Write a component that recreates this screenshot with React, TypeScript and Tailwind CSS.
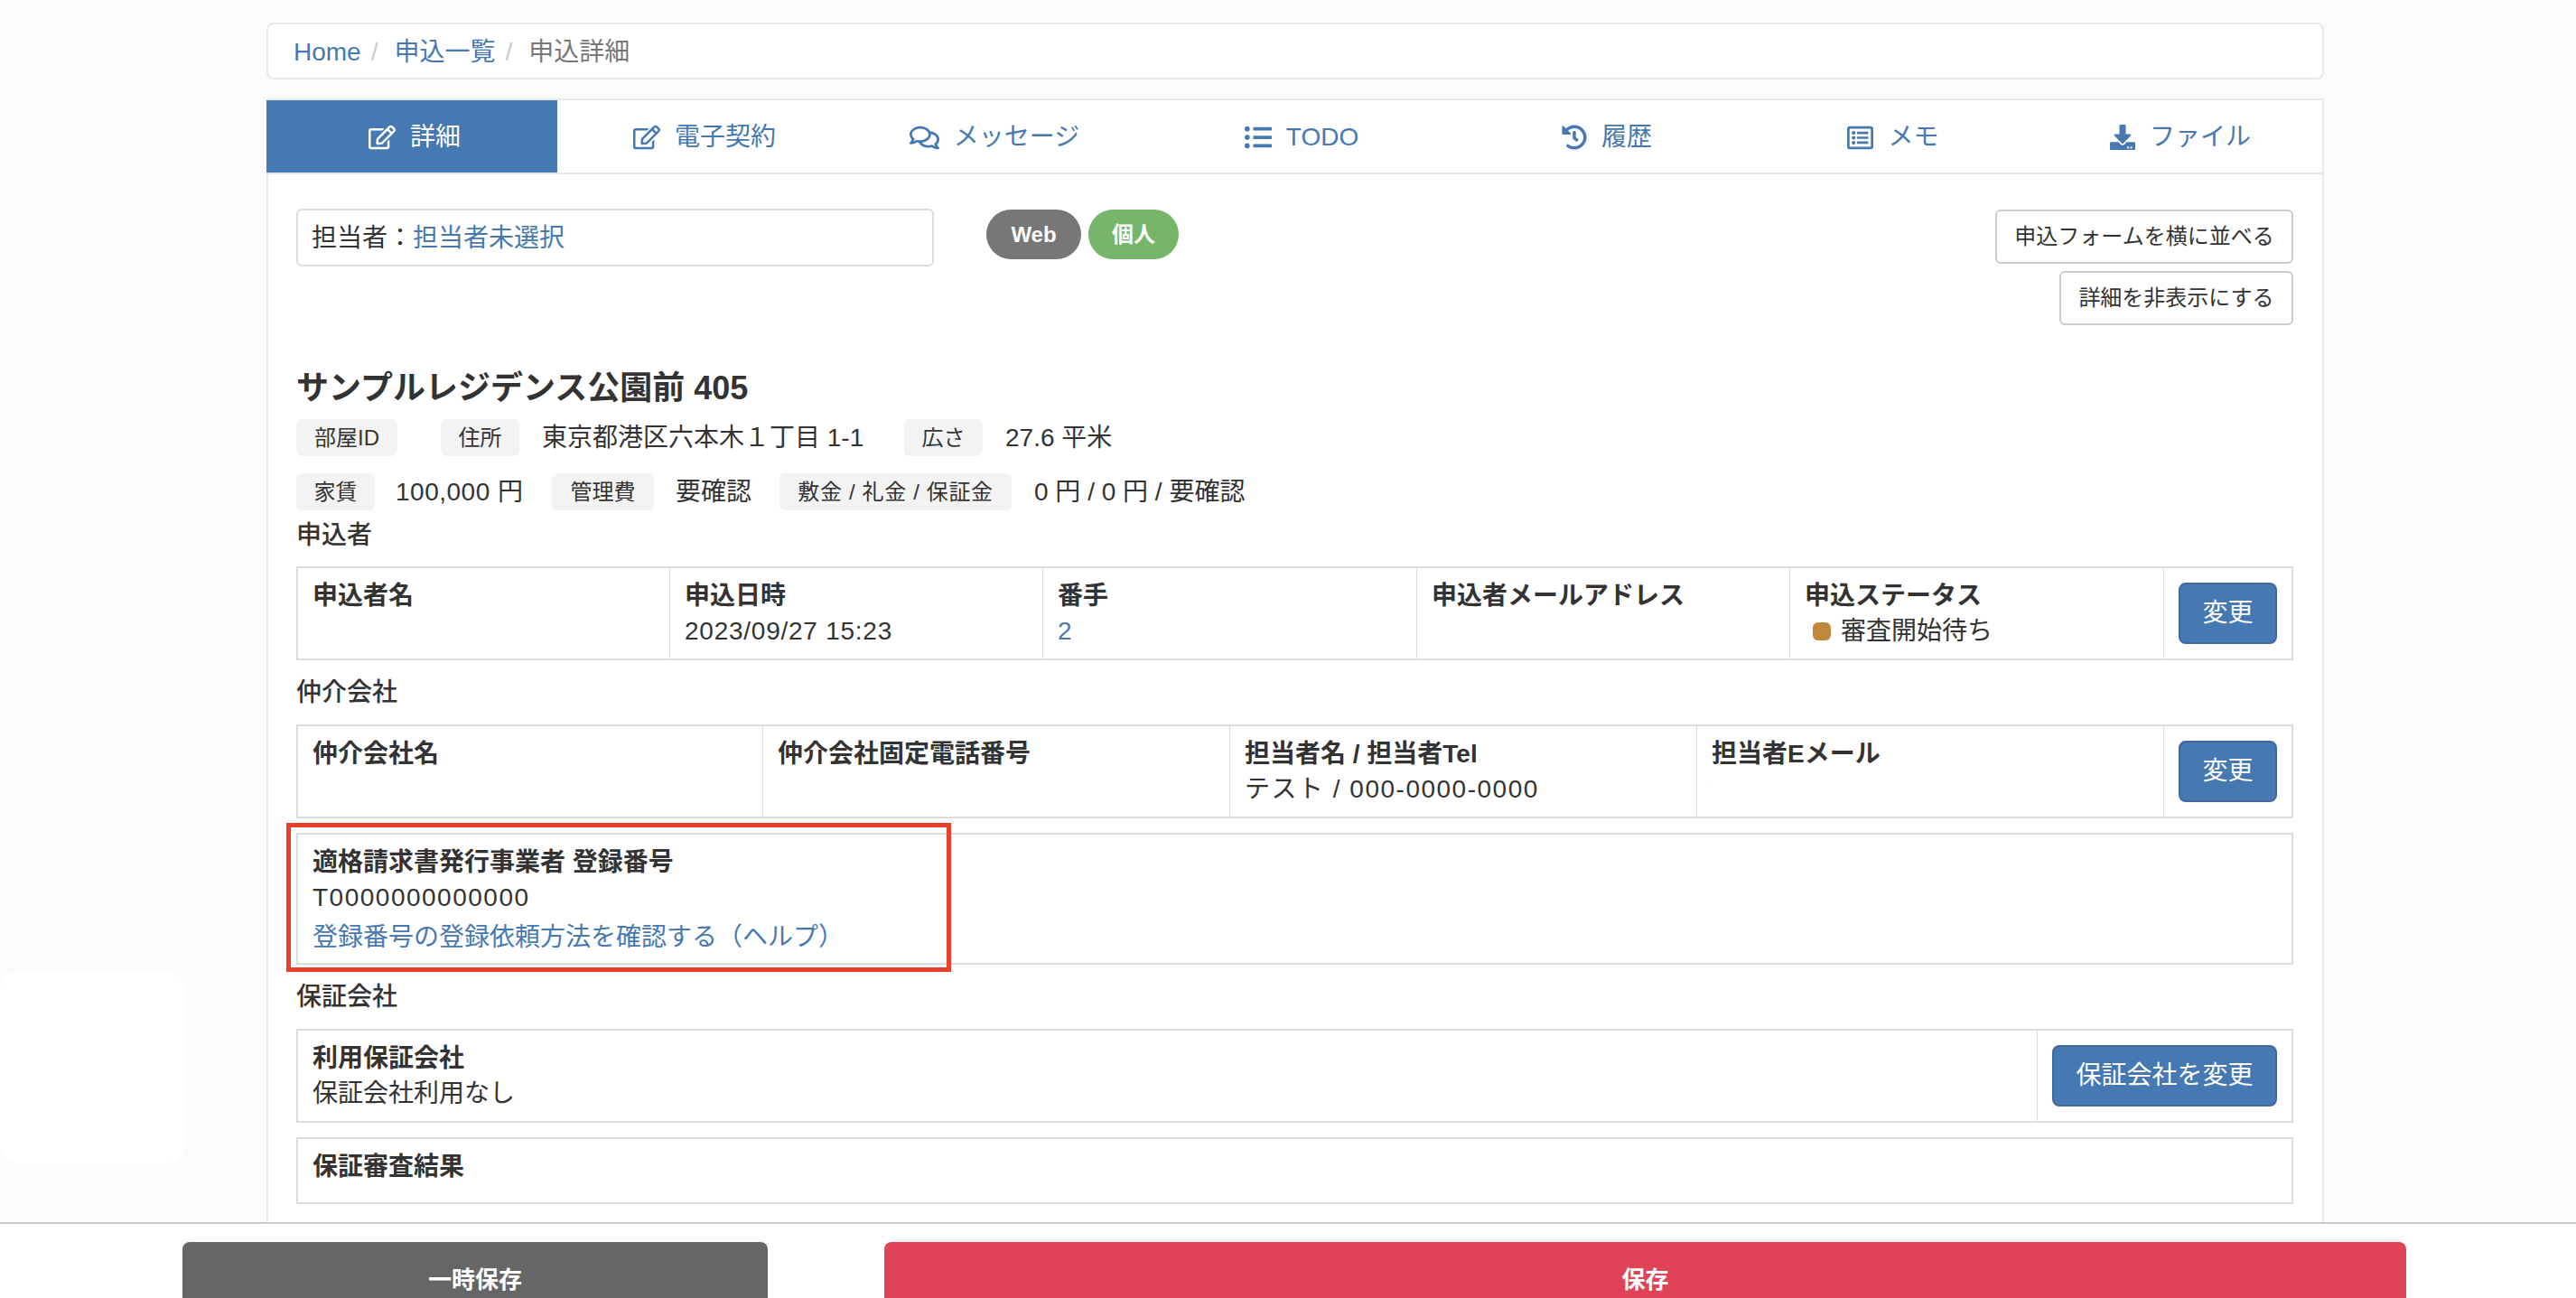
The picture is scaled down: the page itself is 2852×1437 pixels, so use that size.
import React from "react";
import { FaRegEdit, FaRegComments, FaListUl, FaHistory, FaRegListAlt, FaDownload } from "react-icons/fa";

// Tabs are not even in the original, so each one has its own width
const tabs = [
  { label: "詳細", icon: FaRegEdit, size: 30, width: "w-[322px] pl-[6px]", active: true },
  { label: "電子契約", icon: FaRegEdit, size: 30, width: "w-[326px]" },
  { label: "メッセージ", icon: FaRegComments, size: 33, width: "w-[316px]" },
  { label: "TODO", icon: FaListUl, size: 30, width: "w-[364px]" },
  { label: "履歴", icon: FaHistory, size: 28, width: "w-[312px]" },
  { label: "メモ", icon: FaRegListAlt, size: 29, width: "w-[322px]" },
  { label: "ファイル", icon: FaDownload, size: 28, width: "flex-1" },
];

function Label({ width, children }: { width: string; children: React.ReactNode }) {
  return (
    <span className={`${width} flex h-[41px] shrink-0 items-center justify-center rounded-md bg-[#f3f3f3] text-[24px] text-[#333]`}>
      {children}
    </span>
  );
}

function Value({ children }: { children: React.ReactNode }) {
  return <span className="text-[28px] leading-[41px] text-[#333]">{children}</span>;
}

function Heading({ children }: { children: React.ReactNode }) {
  return <h3 className="mt-[16px] mb-[15px] text-[28px] leading-[40px] font-medium text-[#333]">{children}</h3>;
}

function Cell({ title, width, children }: { title: string; width: string; children?: React.ReactNode }) {
  return (
    <div className={`${width} border-r border-[#ddd] pt-[11px] pl-[16px] text-[28px] leading-[39px] text-[#333]`}>
      <div className="font-bold">{title}</div>
      {children}
    </div>
  );
}

function ChangeButton({ label, width }: { label: string; width: string }) {
  return (
    <div className={`${width} flex items-center justify-center`}>
      <button className="h-[68px] rounded-lg border-2 border-[#41699b] bg-[#4678b2] px-[24px] text-[28px] text-white">
        {label}
      </button>
    </div>
  );
}

export default function App() {
  return (
    <div
      className="relative flex h-[1437px] flex-col overflow-hidden bg-[#fbfbfb]"
      style={{ fontFamily: '"Liberation Sans", "Noto Sans CJK JP", sans-serif' }}
    >
      {/* blank floating panel on the left edge */}
      <div className="absolute top-[1076px] left-0 h-[212px] w-[204px] rounded-[20px] bg-white" />

      <main className="ml-[295px] min-h-0 w-[2278px] flex-1 overflow-hidden pt-[25px]">
        <nav className="flex h-[63px] items-center rounded-lg border-2 border-[#e8e8ee] bg-white pt-[2px] pl-[28px] text-[28px]">
          <a className="text-[#4678b2]">Home</a>
          <span className="mr-[18px] ml-[11px] text-[#ccc]">/</span>
          <a className="text-[#4678b2]">申込一覧</a>
          <span className="mr-[18px] ml-[11px] text-[#ccc]">/</span>
          <span className="text-[#777]">申込詳細</span>
        </nav>

        <section className="mt-[21px] border-x-2 border-t-2 border-[#e8e8ee] bg-white pb-[40px]">
          <div className="-ml-[2px] flex h-[82px] border-b-2 border-[#e8e8ee]">
            {tabs.map((tab) => (
              <div
                key={tab.label}
                className={`${tab.width} flex h-[80px] items-center justify-center gap-[16px] pt-[2px] text-[28px] ${
                  tab.active ? "bg-[#4678b2] text-white" : "text-[#4678b2]"
                }`}
              >
                <tab.icon size={tab.size} />
                <span>{tab.label}</span>
              </div>
            ))}
          </div>

          <div className="pt-[38px] pr-[32px] pl-[31px]">
            <div className="flex justify-between">
              <div className="flex items-start">
                <div className="h-[64px] w-[706px] rounded-md border-2 border-[#ddd] pl-[15px] text-[28px] leading-[62px] text-[#333]">
                  担当者：<a className="text-[#4678b2]">担当者未選択</a>
                </div>
                <div className="mt-[1px] ml-[58px] flex gap-[8px] text-[24px] font-bold text-white">
                  <span className="flex h-[55px] w-[105px] items-center justify-center rounded-[28px] bg-[#777]">Web</span>
                  <span className="flex h-[55px] w-[100px] items-center justify-center rounded-[28px] bg-[#75b66a]">個人</span>
                </div>
              </div>
              <div className="mt-[1px] flex flex-col items-end gap-[8px] text-[24px] text-[#333]">
                <button className="h-[60px] w-[330px] rounded-md border-2 border-[#ccc] bg-white">申込フォームを横に並べる</button>
                <button className="h-[60px] w-[259px] rounded-md border-2 border-[#ccc] bg-white">詳細を非表示にする</button>
              </div>
            </div>

            <h2 className="mt-[46px] text-[36px] leading-[48px] font-semibold text-[#333]">サンプルレジデンス公園前 405</h2>

            <div className="mt-[10px] flex">
              <Label width="w-[112px]">部屋ID</Label>
              <span className="w-[48px]" />
              <Label width="w-[87px]">住所</Label>
              <span className="ml-[25px] w-[401px]">
                <Value>東京都港区六本木１丁目 1-1</Value>
              </span>
              <Label width="w-[87px]">広さ</Label>
              <span className="ml-[25px]">
                <Value>27.6 平米</Value>
              </span>
            </div>

            <div className="mt-[19px] flex">
              <Label width="w-[87px]">家賃</Label>
              <span className="ml-[23px] w-[173px] tracking-[0.5px]">
                <Value>100,000 円</Value>
              </span>
              <Label width="w-[113px]">管理費</Label>
              <span className="ml-[24px] w-[115px]">
                <Value>要確認</Value>
              </span>
              <Label width="w-[257px] tracking-[0.65px]">敷金 / 礼金 / 保証金</Label>
              <span className="ml-[25px]">
                <Value>0 円 / 0 円 / 要確認</Value>
              </span>
            </div>

            <h3 className="mt-[8px] mb-[14px] text-[28px] leading-[40px] font-medium text-[#333]">申込者</h3>
            <div className="flex h-[104px] border-2 border-[#ddd]">
              <Cell title="申込者名" width="w-[412px]" />
              <Cell title="申込日時" width="w-[413px]">
                <div className="tracking-[0.75px]">2023/09/27 15:23</div>
              </Cell>
              <Cell title="番手" width="w-[414px]">
                <a className="text-[#4678b2]">2</a>
              </Cell>
              <Cell title="申込者メールアドレス" width="w-[413px]" />
              <Cell title="申込ステータス" width="w-[414px]">
                <div className="flex items-center pl-[9px]">
                  <span className="mr-[11px] h-[20px] w-[20px] rounded-[6px] bg-[#c1873a]" />
                  審査開始待ち
                </div>
              </Cell>
              <ChangeButton label="変更" width="flex-1" />
            </div>

            <Heading>仲介会社</Heading>
            <div className="flex h-[104px] border-2 border-[#ddd]">
              <Cell title="仲介会社名" width="w-[515px]" />
              <Cell title="仲介会社固定電話番号" width="w-[517px]" />
              <Cell title="担当者名 / 担当者Tel" width="w-[517px]">
                <div className="tracking-[1.5px]">テスト / 000-0000-0000</div>
              </Cell>
              <Cell title="担当者Eメール" width="w-[517px]">
                <div className="text-[4px] leading-[20px] text-[#999]">-</div>
              </Cell>
              <ChangeButton label="変更" width="flex-1" />
            </div>

            {/* red frame drawn over the screenshot to call out this box */}
            <div className="relative mt-[16px] h-[146px] border-2 border-[#ddd] pt-[11px] pl-[16px] text-[28px] leading-[39px] text-[#333]">
              <div className="font-bold">適格請求書発行事業者 登録番号</div>
              <div className="tracking-[1.5px]">T0000000000000</div>
              <a className="mt-[5px] block text-[#4678b2]">登録番号の登録依頼方法を確認する（ヘルプ）</a>
              <div className="absolute top-[-13px] left-[-13px] h-[165px] w-[736px] border-[5px] border-[#e8412a]" />
            </div>

            <Heading>保証会社</Heading>
            <div className="flex h-[104px] border-2 border-[#ddd]">
              <Cell title="利用保証会社" width="w-[1926px]">
                <div>保証会社利用なし</div>
              </Cell>
              <ChangeButton label="保証会社を変更" width="flex-1" />
            </div>

            <div className="mt-[16px] h-[74px] border-2 border-[#ddd] pt-[11px] pl-[16px] text-[28px] leading-[39px] font-bold text-[#333]">
              保証審査結果
            </div>
          </div>
        </section>
      </main>

      <footer className="flex h-[84px] shrink-0 gap-[129px] border-t-2 border-[#ccc] bg-white pt-[20px] pl-[202px] text-[26px] font-bold text-white">
        <button className="h-[84px] w-[648px] shrink-0 rounded-t-lg bg-[#666]">一時保存</button>
        <button className="h-[84px] w-[1685px] shrink-0 rounded-t-lg bg-[#e04257]">保存</button>
      </footer>
    </div>
  );
}
